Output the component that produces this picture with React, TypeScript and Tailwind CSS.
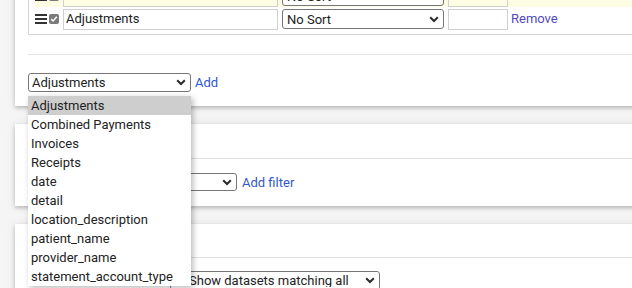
import React from "react";

const DragIcon = () => (
  <svg width="12" height="10" viewBox="0 0 12 10" className="shrink-0">
    <rect x="0" y="0" width="12" height="2" fill="#333" />
    <rect x="0" y="4" width="12" height="2" fill="#333" />
    <rect x="0" y="8" width="12" height="2" fill="#333" />
  </svg>
);

const Check = () => (
  <div className="w-[10px] h-[10px] rounded-[2px] bg-[#7a7a7a] flex items-center justify-center shrink-0">
    <svg width="8" height="8" viewBox="0 0 8 8">
      <path d="M1.2 4.1 L3.1 6 L6.8 1.8" stroke="#fff" strokeWidth="1.5" fill="none" />
    </svg>
  </div>
);

const Chevron = () => (
  <svg width="10" height="7" viewBox="0 0 10 7" className="shrink-0">
    <path d="M1.2 1.3 L5 5 L8.8 1.3" stroke="#2a2a2a" strokeWidth="2" fill="none" />
  </svg>
);

type SelProps = {
  text: string;
  className: string;
  textClass: string;
};

const Select = ({ text, className, textClass }: SelProps) => (
  <div
    className={`flex items-center border border-[#767676] rounded-[3px] bg-white text-[13px] text-[#222] ${className}`}
  >
    <span className={`overflow-hidden whitespace-nowrap leading-none ${textClass}`}>{text}</span>
    <div className="ml-auto mr-[4px] flex items-center">
      <Chevron />
    </div>
  </div>
);

export default function App() {
  const options = [
    "Adjustments",
    "Combined Payments",
    "Invoices",
    "Receipts",
    "date",
    "detail",
    "location_description",
    "patient_name",
    "provider_name",
    "statement_account_type",
  ];
  const cardShadow =
    "shadow-[0_2px_4px_rgba(0,0,0,0.22),0_0_10px_rgba(0,0,0,0.08)]";
  return (
    <div
      className="relative w-[632px] h-[288px] overflow-hidden bg-[#f5f5f5] text-[13px] text-[#222]"
      style={{ fontFamily: "Roboto, 'Liberation Sans', sans-serif" }}
    >
      {/* Card 1 */}
      <div className={`ml-[15px] -mt-[30px] w-[700px] bg-white pt-[14px] px-[13px] pb-[13px] ${cardShadow}`}>
        <div className="border border-[#d4d4d4] pl-[6px] pb-[4px] flex flex-col gap-[1px]">
          <div className="h-[22px] flex items-center bg-[#fdfde3]">
            <DragIcon />
            <div className="ml-[2px]"><Check /></div>
            <div className="ml-[4px] w-[215px] h-[21px] border border-[#d0d0d0] bg-[#fdfde3] px-[2px] flex items-center">
              Patient name
            </div>
            <Select text="No Sort" className="ml-[4px] w-[162px] h-[20px]" textClass="pl-[4px]" />
            <div className="ml-[4px] w-[60px] h-[21px] border border-[#d0d0d0] bg-[#fdfde3]" />
          </div>
          <div className="h-[22px] flex items-center">
            <DragIcon />
            <div className="ml-[2px]"><Check /></div>
            <div className="ml-[4px] w-[215px] h-[21px] border border-[#d0d0d0] bg-white px-[2px] flex items-center">
              Adjustments
            </div>
            <Select text="No Sort" className="ml-[4px] w-[162px] h-[20px]" textClass="pl-[4px]" />
            <div className="ml-[4px] w-[60px] h-[21px] border border-[#d0d0d0] bg-white" />
            <span className="ml-[3px] text-[#5249c4]">Remove</span>
          </div>
        </div>
        <div className="mt-[19px] border-t border-[#e6e6e6]" />
        <div className="mt-[18px] flex items-center">
          <Select text="Adjustments" className="w-[163px] h-[19px]" textClass="pl-[3px]" />
          <span className="ml-[4px] text-[#3157cc]">Add</span>
        </div>
      </div>

      {/* Card 2 */}
      <div className={`ml-[15px] mt-[18px] w-[700px] bg-white px-[13px] pb-[14px] ${cardShadow}`}>
        <div className="h-[34px]" />
        <div className="border-t border-[#e0e0e0]" />
        <div className="mt-[14px] flex items-center">
          <Select text="" className="w-[209px] h-[18px]" textClass="pl-[3px]" />
          <span className="ml-[5px] text-[#3157cc]">Add filter</span>
        </div>
      </div>

      {/* Card 3 */}
      <div className={`ml-[15px] mt-[18px] w-[700px] bg-white px-[13px] pb-[14px] ${cardShadow}`}>
        <div className="h-[33px]" />
        <div className="border-t border-[#e0e0e0]" />
        <div className="mt-[13px] flex items-center">
          <Select
            text="Show datasets matching all filters"
            className="ml-[142px] w-[210px] h-[19px]"
            textClass="pl-[18px] w-[179px]"
          />
        </div>
      </div>

      {/* Dropdown popup */}
      <div className="absolute left-[28px] top-[96px] w-[163px] bg-white shadow-[2px_2px_6px_rgba(0,0,0,0.28)]">
        {options.map((o, i) => (
          <div
            key={o}
            className={`h-[19px] leading-[19px] pl-[3px] whitespace-nowrap text-[13px] text-[#222] ${
              i === 0 ? "bg-[#cecece]" : ""
            }`}
          >
            {o}
          </div>
        ))}
      </div>
    </div>
  );
}
